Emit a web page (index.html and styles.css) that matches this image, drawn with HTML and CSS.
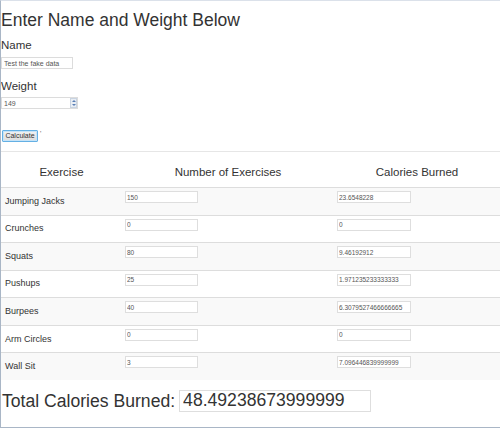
FILE: index.html
```html
<!DOCTYPE html>
<html>
<head>
<meta charset="utf-8">
<link rel="stylesheet" href="styles.css">
</head>
<body>
<div class="frame">
  <h3 class="title">Enter Name and Weight Below</h3>
  <label class="field-label name-label">Name</label>
  <input class="text-in name-in" type="text" value="Test the fake data">
  <label class="field-label weight-label">Weight</label>
  <div class="num-wrap">
    <input class="text-in num-in" type="text" value="149">
    <span class="spin"><span class="up"></span><span class="down"></span></span>
  </div>
  <div class="btn-row"><button class="btn">Calculate</button><span class="tick">'</span></div>
  <hr class="rule">
  <div class="table">
    <div class="thead">
      <div class="th">Exercise</div>
      <div class="th">Number of Exercises</div>
      <div class="th">Calories Burned</div>
    </div>
    <div class="row odd"><div class="cell name">Jumping Jacks</div><div class="cell"><input class="cell-in count" value="150"></div><div class="cell"><input class="cell-in cal" value="23.6548228"></div></div>
    <div class="row"><div class="cell name">Crunches</div><div class="cell"><input class="cell-in count" value="0"></div><div class="cell"><input class="cell-in cal" value="0"></div></div>
    <div class="row odd"><div class="cell name">Squats</div><div class="cell"><input class="cell-in count" value="80"></div><div class="cell"><input class="cell-in cal" value="9.46192912"></div></div>
    <div class="row"><div class="cell name">Pushups</div><div class="cell"><input class="cell-in count" value="25"></div><div class="cell"><input class="cell-in cal" value="1.971235233333333"></div></div>
    <div class="row odd"><div class="cell name">Burpees</div><div class="cell"><input class="cell-in count" value="40"></div><div class="cell"><input class="cell-in cal" value="6.3079527466666665"></div></div>
    <div class="row"><div class="cell name">Arm Circles</div><div class="cell"><input class="cell-in count" value="0"></div><div class="cell"><input class="cell-in cal" value="0"></div></div>
    <div class="row odd"><div class="cell name">Wall Sit</div><div class="cell"><input class="cell-in count" value="3"></div><div class="cell"><input class="cell-in cal" value="7.096446839999999"></div></div>
  </div>
  <div class="total">
    <span class="total-label">Total Calories Burned:</span>
    <input class="total-in" value="48.49238673999999">
  </div>
</div>
</body>
</html>
```

FILE: styles.css
```css
* { box-sizing: border-box; }
html, body { margin: 0; padding: 0; background: #fff; }
body { font-family: "Liberation Sans", Arial, sans-serif; color: #333; }

.frame {
  width: 500px;
  height: 428px;
  border-top: 1px solid #dbe1ea;
  border-left: 1px solid #a9b6c6;
  border-bottom: 1px solid #a9b6c6;
  display: flex;
  flex-direction: column;
  align-items: flex-start;
  overflow: hidden;
}

.title {
  margin: 9px 0 0 0;
  font-size: 17.5px;
  line-height: 20px;
  font-weight: normal;
  padding-left: 0;
}

.field-label {
  display: block;
  font-size: 11.5px;
  line-height: 14px;
  margin-top: 8px;
}
.weight-label { margin-top: 10px; }

.text-in {
  display: block;
  font-family: "Liberation Sans", Arial, sans-serif;
  font-size: 7px;
  color: #555;
  height: 12px;
  border: 1px solid #dcdcdc;
  padding: 0 2px;
  margin: 0;
  outline: none;
  background: #fff;
}
.name-in { width: 72px; margin-top: 5px; }

.num-wrap {
  position: relative;
  margin-top: 4px;
}
.num-in { width: 77px; }
.spin {
  position: absolute;
  left: 69px;
  top: 1px;
  width: 7px;
  height: 10px;
  background: #e9eef4;
  border: 1px solid #c9d4e2;
  display: flex;
  flex-direction: column;
  align-items: center;
  justify-content: space-around;
}
.up, .down {
  width: 0; height: 0;
  border-left: 2px solid transparent;
  border-right: 2px solid transparent;
}
.up { border-bottom: 2px solid #5a7fb5; }
.down { border-top: 2px solid #5a7fb5; }

.btn-row {
  display: flex;
  align-items: flex-start;
  margin-top: 21px;
  margin-left: 1px;
}
.btn {
  font-family: "Liberation Sans", Arial, sans-serif;
  font-size: 7px;
  color: #333;
  height: 12px;
  width: 36px;
  padding: 0;
  margin: 0;
  border: 1px solid #64b0e4;
  box-shadow: inset 0 0 0 1px #c6e3f7;
  border-radius: 1px;
  background: linear-gradient(#f2f2f2, #dcdcdc);
  line-height: 10px;
}
.tick {
  font-size: 7px;
  color: #666;
  margin-left: 2px;
  line-height: 8px;
}

.rule {
  width: 499px;
  border: 0;
  border-top: 1px solid #e6e6e6;
  margin: 9px 0 0 0;
  height: 0;
}

.table {
  width: 499px;
  display: flex;
  flex-direction: column;
}
.thead, .row {
  display: grid;
  grid-template-columns: 121px 212px 166px;
}
.thead {
  height: 35px;
  align-items: end;
  padding-bottom: 8px;
}
.th {
  text-align: center;
  font-size: 11.5px;
  line-height: 14px;
}
.row {
  height: calc(193px / 7);
  border-top: 1px solid #dddddd;
}
.row.odd { background: #f9f9f9; }
.cell { padding: 3px 3px 0 3px; }
.cell.name {
  align-self: center;
  padding: 0 0 0 4px;
  font-size: 9px;
  line-height: 11px;
}
.cell-in {
  display: block;
  height: 12px;
  border: 1px solid #dedede;
  font-family: "Liberation Sans", Arial, sans-serif;
  font-size: 6.5px;
  color: #555;
  padding: 0 1px;
  margin: 0;
  background: #fff;
  outline: none;
}
.count { width: 73px; }
.cal { width: 74px; }

.total {
  display: flex;
  align-items: center;
  margin-top: 10px;
  height: 22px;
}
.total-label {
  font-size: 17.6px;
  line-height: 22px;
  padding-left: 1px;
}
.total-in {
  margin-left: 4px;
  width: 192px;
  height: 22px;
  border: 1px solid #dedede;
  font-family: "Liberation Sans", Arial, sans-serif;
  font-size: 17.6px;
  color: #333;
  padding: 0 3px;
  outline: none;
  background: #fff;
}
```
